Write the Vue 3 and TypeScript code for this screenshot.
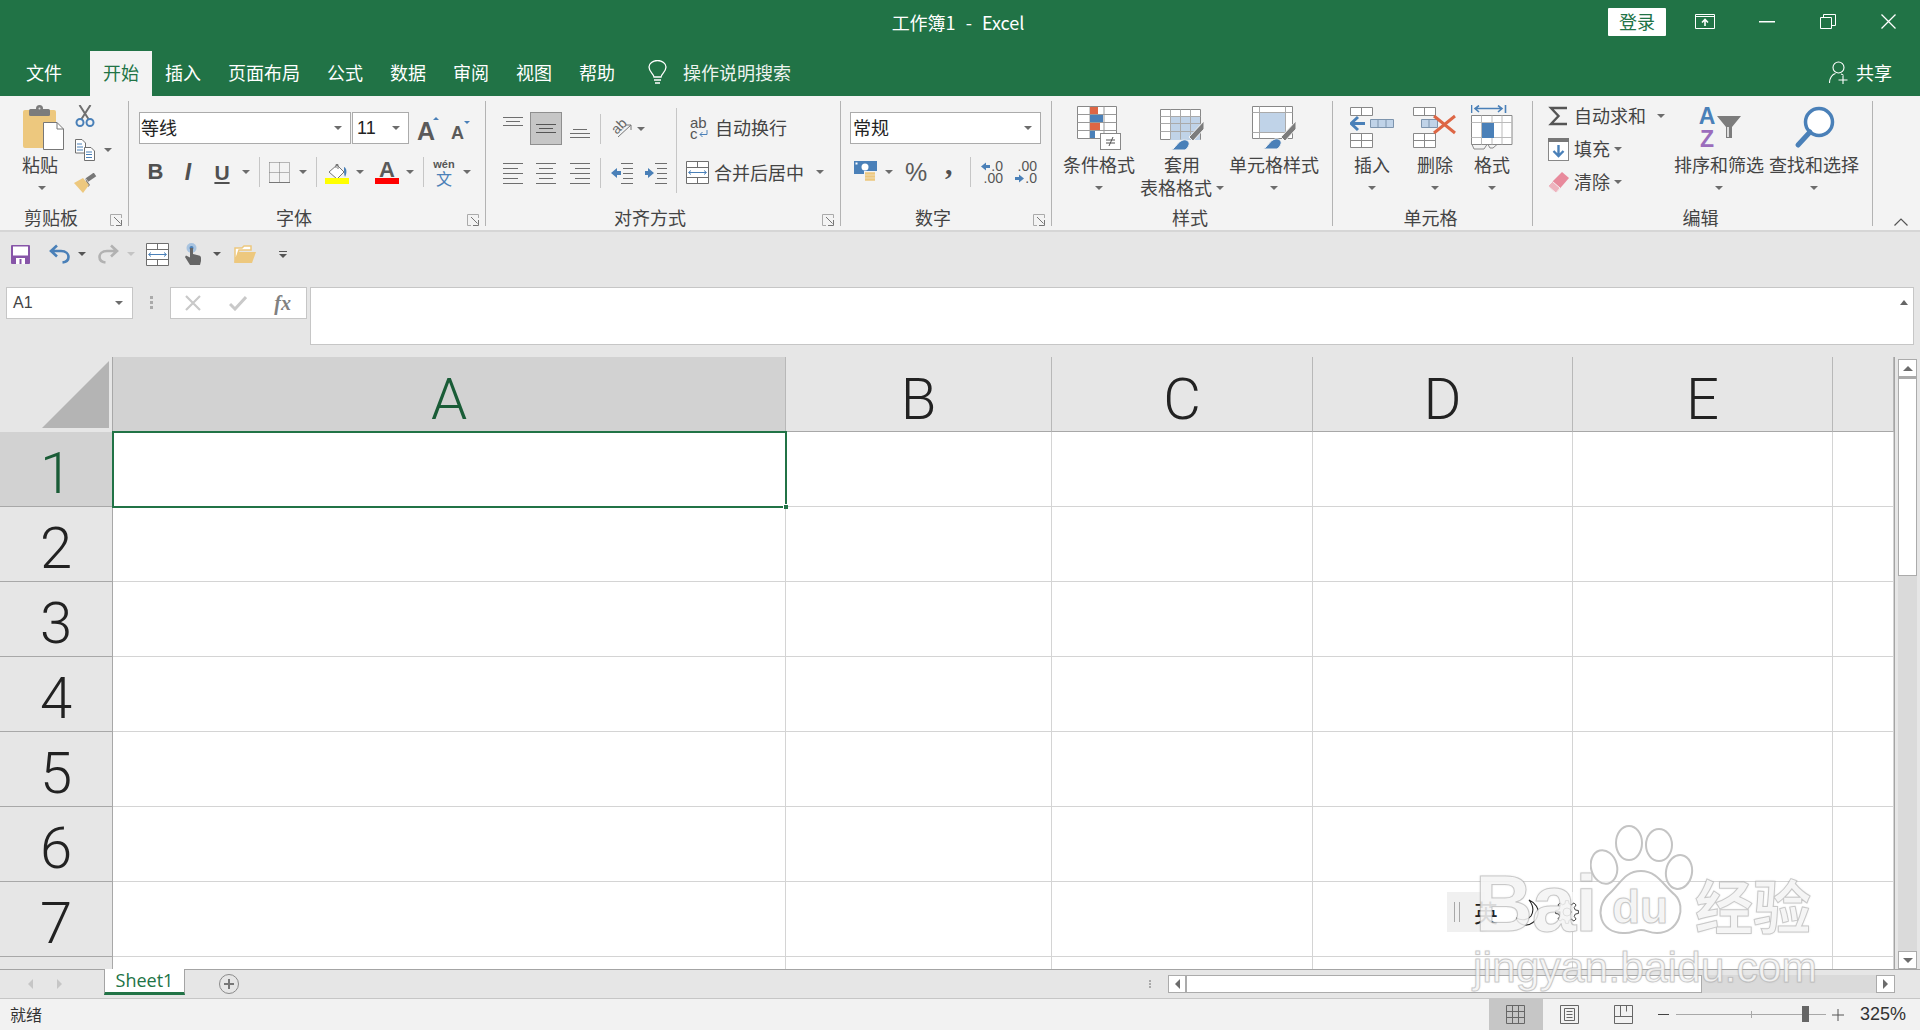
<script setup lang="ts">
// Excel 2016 主窗口：功能区 + 工作表
const columns = ['A', 'B', 'C', 'D', 'E', '']
const rows = [1, 2, 3, 4, 5, 6, 7, 8]

// 输入法工具条的齿轮轮廓
function gearPath(teeth: number, outer: number, inner: number): string {
  const pts: string[] = []
  const step = (Math.PI * 2) / teeth
  for (let i = 0; i < teeth; i++) {
    const a = i * step
    const offsets: [number, number][] = [[-0.3, inner], [-0.17, outer], [0.17, outer], [0.3, inner]]
    for (const [k, r] of offsets) {
      const t = a + k * step
      pts.push(`${(12 + r * Math.cos(t)).toFixed(1)} ${(12 + r * Math.sin(t)).toFixed(1)}`)
    }
  }
  return `M${pts.join('L')}Z`
}
const gear = gearPath(8, 11.5, 8.5)
</script>

<template>
  <div class="excel">
    <!-- 标题栏 -->
    <header class="titlebar">
      <div></div>
      <div class="doc-title">工作簿1  -  Excel</div>
      <div class="win-controls">
        <button class="login">登录</button>
        <svg class="wc-display" width="20" height="15" viewBox="0 0 20 15" fill="none" stroke="#fff">
          <path d="M.5.5h19v14H.5zM.5 2.500h19" />
          <path d="M10 12V6M7 8.500 10 5.500l3 3" stroke-width="1.600" />
        </svg>
        <svg class="wc-min" width="16" height="2" viewBox="0 0 16 2"><rect width="16" height="1.500" fill="#fff" /></svg>
        <svg class="wc-max" width="16" height="15" viewBox="0 0 16 15" fill="none" stroke="#fff">
          <path d="M.5 3.500h11v11H.5zM3.500 3.500V.5h12v11h-4" />
        </svg>
        <svg class="wc-max" width="15" height="15" viewBox="0 0 15 15" fill="none" stroke="#fff" stroke-width="1.300">
          <path d="M.5.5l14 14M14.500.5l-14 14" />
        </svg>
      </div>
    </header>

    <!-- 选项卡 -->
    <nav class="tabs">
      <span class="tab first">文件</span>
      <span class="tab active">开始</span>
      <span class="tab">插入</span>
      <span class="tab">页面布局</span>
      <span class="tab">公式</span>
      <span class="tab">数据</span>
      <span class="tab">审阅</span>
      <span class="tab">视图</span>
      <span class="tab">帮助</span>
      <svg class="bulb" width="19" height="25" viewBox="0 0 19 25" fill="none" stroke="#fff" stroke-width="1.300">
        <path d="M6 17c0-3-5-5-5-10a8.500 6.500 0 0 1 17 0c0 5-5 7-5 10z" />
        <path d="M6 20h7M7 23h5" stroke-width="1.600" />
      </svg>
      <span class="search">操作说明搜索</span>
      <span class="share">
        <svg width="19" height="23" viewBox="0 0 19 23" fill="none" stroke="#fff" stroke-width="1.100">
          <circle cx="9.500" cy="6.500" r="5.500" />
          <path d="M.5 22c0-5 3-9 6-9.500M12 13c1 .3 2 .8 2.500 1.500M14 15v8M9.500 19h9" />
        </svg>
        共享
      </span>
    </nav>

    <!-- 功能区 -->
    <section class="ribbon">
      <!-- 剪贴板 -->
      <div class="group g-clip">
        <div class="body row">
          <div class="big paste">
            <svg width="41" height="46" viewBox="0 0 41 46">
              <rect y="5" width="33" height="38" rx="2" fill="#edc87e" />
              <rect x="6" y="4" width="21" height="7" rx="1.500" fill="#7c7c7c" />
              <circle cx="16.500" cy="3.500" r="3.500" fill="#7c7c7c" />
              <circle cx="16.500" cy="3.500" r="1" fill="#ddd" />
              <path d="M20.500 17.500H34l6.500 6.500v20.500h-20z" fill="#fff" stroke="#777" />
              <path d="M34 17.500V24h6.500" fill="none" stroke="#777" />
            </svg>
            <span class="t">粘贴</span>
            <i class="caret"></i>
          </div>
          <div class="clip-tools">
            <svg width="20" height="22" viewBox="0 0 20 22" fill="none">
              <path d="M6.500 14 15.500 0M13.500 14 4.500 0" stroke="#6f6f6f" stroke-width="2" />
              <circle cx="5" cy="17.500" r="3.500" stroke="#4a80b8" stroke-width="2" />
              <circle cx="15" cy="17.500" r="3.500" stroke="#4a80b8" stroke-width="2" />
            </svg>
            <div class="copy-row">
              <svg width="20" height="22" viewBox="0 0 20 22" fill="#fff" stroke="#6f6f6f">
                <path d="M.5.5h6.500l3.500 3.500v10h-10z" />
                <path d="M2 5h5M2 8h6M2 11h6" stroke="#4a80b8" />
                <path d="M9.500 8.500h6.500l3.500 3.500v9.500h-10z" />
                <path d="M11 13h6M11 15.500h6M11 18.500h6" stroke="#4a80b8" />
              </svg>
              <i class="caret m9"></i>
            </div>
            <svg width="23" height="20" viewBox="0 0 23 20">
              <path d="M13 7 21 1.500" stroke="#777" stroke-width="4.500" />
              <path d="M11 5l5 7-2 2z" fill="#777" />
              <path d="M0 10l9-5 6 7-6 8z" fill="#edc87e" />
            </svg>
          </div>
        </div>
        <div class="glabel launch-gap">剪贴板</div>
        <svg class="launcher" width="12" height="12" viewBox="0 0 12 12" fill="none" stroke="#777">
          <path d="M11.500 4V.5H.5v11H4" stroke="#aaa" />
          <path d="M4 3l6.500 6.500M6 11.500h5.500V6" />
        </svg>
      </div>

      <!-- 字体 -->
      <div class="group g-font">
        <div class="body">
          <div class="row r1">
            <div class="select font-name"><span>等线</span><i class="caret"></i></div>
            <div class="select font-size"><span>11</span><i class="caret"></i></div>
            <span class="grow-a big-a">A<b class="tri up"></b></span>
            <span class="grow-a small-a">A<b class="tri down"></b></span>
          </div>
          <div class="row r2">
            <span class="fmt bold">B</span>
            <span class="fmt ital">I</span>
            <span class="fmt under"><u>U</u></span>
            <i class="caret m2"></i>
            <i class="sep m9"></i>
            <svg class="m9" width="21" height="21" viewBox="0 0 21 21" fill="none" stroke="#777">
              <path d="M.5.5h20M.5 10.500h20M.5.5v20M10.500.5v20M20.500.5v20" stroke-dasharray="1 1" />
              <path d="M0 20.500h21" />
            </svg>
            <i class="caret m9"></i>
            <i class="sep m9"></i>
            <span class="swatch-btn m8">
              <svg width="24" height="18" viewBox="0 0 24 18">
                <path d="M4 9l8-7 7 7-7 7z" fill="#fff" stroke="#777" />
                <path d="M11 5V1.500h2V6" fill="none" stroke="#777" />
                <path d="M19 4c3 1 3 6 1 10-1-2-1-6-1-10z" fill="#4a80b8" />
              </svg>
              <i class="bar yellow"></i>
            </span>
            <i class="caret m7"></i>
            <span class="swatch-btn color-a m11">A<i class="bar red"></i></span>
            <i class="caret m7"></i>
            <i class="sep m9"></i>
            <span class="wen m10"><small>wén</small><em>文</em></span>
            <i class="caret m9"></i>
          </div>
        </div>
        <div class="glabel launch-gap">字体</div>
        <svg class="launcher" width="12" height="12" viewBox="0 0 12 12" fill="none" stroke="#777">
          <path d="M11.500 4V.5H.5v11H4" stroke="#aaa" />
          <path d="M4 3l6.500 6.500M6 11.500h5.500V6" />
        </svg>
      </div>

      <!-- 对齐方式 -->
      <div class="group g-align">
        <div class="body row">
          <div class="align-left">
            <div class="row r1 tight">
              <span class="cell c34 start">
                <svg width="20" height="10" viewBox="0 0 20 10" stroke="#6e6e6e"><path d="M0 .5h20M3 4.500h14M0 8.500h20" /></svg>
              </span>
              <span class="cell c32 picked">
                <svg width="20" height="10" viewBox="0 0 20 10" stroke="#555"><path d="M0 .5h20M3 4.500h14M0 8.500h20" /></svg>
              </span>
              <span class="cell c36 end">
                <svg width="20" height="10" viewBox="0 0 20 10" stroke="#6e6e6e"><path d="M3 .5h14M0 4.500h20M0 8.500h20" /></svg>
              </span>
              <i class="sep m2"></i>
              <span class="ori m10">
                <span class="ori-ab">ab</span>
                <svg width="21" height="19" viewBox="0 0 21 19" fill="none" stroke="#777"><path d="M7 18 20 6M20 6h-5M20 6v5" /></svg>
              </span>
              <i class="caret m5"></i>
            </div>
            <div class="row r2 tight">
              <span class="cell c34">
                <svg width="20" height="22" viewBox="0 0 20 22" stroke="#6e6e6e"><path d="M0 1.500h20M0 6.500h15M0 11.500h20M0 16.500h15M0 21.500h20" /></svg>
              </span>
              <span class="cell c32">
                <svg width="20" height="22" viewBox="0 0 20 22" stroke="#6e6e6e"><path d="M0 1.500h20M3 6.500h14M0 11.500h20M3 16.500h14M0 21.500h20" /></svg>
              </span>
              <span class="cell c36">
                <svg width="20" height="22" viewBox="0 0 20 22" stroke="#6e6e6e"><path d="M0 1.500h20M5 6.500h15M0 11.500h20M5 16.500h15M0 21.500h20" /></svg>
              </span>
              <i class="sep m2"></i>
              <svg class="m10" width="22" height="22" viewBox="0 0 22 22">
                <path d="M10 1.500h12M12 6.500h10M12 11.500h10M12 16.500h10M10 21.500h12" stroke="#6e6e6e" />
                <path d="M0 11l6-5v3h4v4H6v3z" fill="#4a80b8" />
              </svg>
              <svg class="m12" width="22" height="22" viewBox="0 0 22 22">
                <path d="M10 1.500h12M12 6.500h10M12 11.500h10M12 16.500h10M10 21.500h12" stroke="#6e6e6e" />
                <path d="M9 11 3 6v3H0v4h3v3z" fill="#4a80b8" />
              </svg>
            </div>
          </div>
          <i class="sep-long"></i>
          <div class="align-right">
            <div class="line-tool wrap">
              <span class="wrap-ic">
                <span>ab</span>
                <span class="wrap-c">c<svg width="9" height="8" viewBox="0 0 9 8" fill="none" stroke="#4a80b8"><path d="M8 0v4.500H1M3.500 2 1 4.500 3.500 7" /></svg></span>
              </span>
              <span class="m7">自动换行</span>
            </div>
            <div class="line-tool merge">
              <svg width="23" height="23" viewBox="0 0 23 23" fill="#fff" stroke="#6e6e6e">
                <path d="M.5.5h22v22H.5z" />
                <path d="M.5 6.500h22M.5 16.500h22M11.500.5v6M11.500 16.500v6" />
                <path d="M3 11.500h17M5 9.500l-2.500 2 2.500 2M18 9.500l2.500 2-2.500 2" stroke="#4a80b8" fill="none" />
              </svg>
              <span class="m5">合并后居中</span>
              <i class="caret m12"></i>
            </div>
          </div>
        </div>
        <div class="glabel launch-gap">对齐方式</div>
        <svg class="launcher" width="12" height="12" viewBox="0 0 12 12" fill="none" stroke="#777">
          <path d="M11.500 4V.5H.5v11H4" stroke="#aaa" />
          <path d="M4 3l6.500 6.500M6 11.500h5.500V6" />
        </svg>
      </div>

      <!-- 数字 -->
      <div class="group g-num">
        <div class="body">
          <div class="row r1">
            <div class="select num-fmt"><span>常规</span><i class="caret"></i></div>
          </div>
          <div class="row r2">
            <svg class="m13" width="23" height="23" viewBox="0 0 23 23">
              <rect width="23" height="13" fill="#4a80b8" />
              <circle cx="11" cy="6" r="3.500" fill="#fff" />
              <rect x="1.500" y="1.500" width="2" height="2" fill="#fff" />
              <rect x="10" y="10" width="13" height="12" fill="#f3f3f3" />
              <path d="M11 12.500h10M11 15.500h10M11 18.500h10" stroke="#edc87e" stroke-width="2.500" />
            </svg>
            <i class="caret m8"></i>
            <span class="pct m12">%</span>
            <span class="comma">,</span>
            <i class="sep m15"></i>
            <span class="dec m9">
              <span class="dl"><svg width="9" height="9" viewBox="0 0 9 9"><path d="M0 4.500 5 .5V3h4v3H5v2.500z" fill="#4a80b8" /></svg>.0</span>
              <span class="dl">.00</span>
            </span>
            <span class="dec m11">
              <span class="dl">.00</span>
              <span class="dl"><svg width="9" height="9" viewBox="0 0 9 9"><path d="M9 4.500 4 .5V3H0v3h4v2.500z" fill="#4a80b8" /></svg>.0</span>
            </span>
          </div>
        </div>
        <div class="glabel launch-gap">数字</div>
        <svg class="launcher" width="12" height="12" viewBox="0 0 12 12" fill="none" stroke="#777">
          <path d="M11.500 4V.5H.5v11H4" stroke="#aaa" />
          <path d="M4 3l6.500 6.500M6 11.500h5.500V6" />
        </svg>
      </div>

      <!-- 样式 -->
      <div class="group g-style">
        <div class="body row">
          <div class="big w72 m11">
            <svg class="ic" width="44" height="46" viewBox="0 0 44 46">
              <path d="M.5 1.500h39v32H.5z" fill="#fff" stroke="#888" />
              <path d="M.5 9.500h39M.5 17.500h39M.5 25.500h39M13 1.500v32M27 1.500v32" stroke="#999" />
              <rect x="13" y="2" width="8" height="7" fill="#dd6645" />
              <rect x="13" y="10" width="13" height="7" fill="#4a80b8" />
              <rect x="13" y="18" width="10" height="7" fill="#dd6645" />
              <rect x="13" y="26" width="5" height="7" fill="#4a80b8" />
              <rect x="23.500" y="28.500" width="20" height="16" fill="#fff" stroke="#888" />
              <path d="M29 35h9M29 38h9M36 32l-4 9" stroke="#555" fill="none" />
            </svg>
            <span class="t">条件格式</span>
            <i class="caret"></i>
          </div>
          <div class="big w84 m5">
            <svg class="ic" width="44" height="46" viewBox="0 0 44 46">
              <path d="M.5 4.500h40v30H.5z" fill="#fff" stroke="#888" />
              <rect x="10" y="11" width="30" height="24" fill="#c0d3e8" />
              <path d="M.5 11.500h40M.5 18.500h40M.5 26.500h40M10.500 4.500v30M20.500 4.500v30M30.500 4.500v30" stroke="#aaa" />
              <path d="M29 32 44 16v8L33 36z" fill="#7c7c7c" stroke="#f3f3f3" />
              <path d="M11 45c5-2 6-8 12-10 4-1 7 2 6 5-1 2-2 4-4 5z" fill="#4a80b8" stroke="#f3f3f3" />
            </svg>
            <span class="t">套用</span>
            <span class="t t2">表格格式<i class="caret m4"></i></span>
          </div>
          <div class="big w90 m5">
            <svg class="ic" width="44" height="46" viewBox="0 0 44 46">
              <path d="M.5 1.500h40v32H.5z" fill="#fff" stroke="#888" />
              <path d="M.5 7.500h40M.5 27.500h40M7.500 1.500v32M33.500 1.500v32" stroke="#aaa" />
              <rect x="8" y="8" width="25" height="19" fill="#c0d3e8" />
              <path d="M29 32 44 16v8L33 36z" fill="#7c7c7c" stroke="#f3f3f3" />
              <path d="M11 44c5-2 6-8 12-10 4-1 7 2 6 5-1 2-2 4-4 5z" fill="#4a80b8" stroke="#f3f3f3" />
            </svg>
            <span class="t">单元格样式</span>
            <i class="caret"></i>
          </div>
        </div>
        <div class="glabel">样式</div>
      </div>

      <!-- 单元格 -->
      <div class="group g-cells">
        <div class="body row">
          <div class="big w44 m17">
            <svg class="ic" width="44" height="46" viewBox="0 0 44 46" fill="#fff" stroke="#888">
              <path d="M.5 2.500h22v8H.5zM11.500 2.500v8M.5 28.500h22v14H.5zM.5 35.500h22M11.500 28.500v14" />
              <path d="M20.500 14.500h23v8h-23zM28 14.500v8M36 14.500v8" fill="#c0d3e8" stroke="#7d94ad" />
              <path d="M15 18.500H3M8 12l-7 6.500 7 6.500" fill="none" stroke="#4a80b8" stroke-width="3" />
            </svg>
            <span class="t">插入</span>
            <i class="caret"></i>
          </div>
          <div class="big w44 m19">
            <svg class="ic" width="44" height="46" viewBox="0 0 44 46" fill="#fff" stroke="#888">
              <path d="M.5 2.500h22v8H.5zM11.500 2.500v8M.5 28.500h22v14H.5zM.5 35.500h22M11.500 28.500v14" />
              <path d="M8.500 14.500h16v8h-16zM16 14.500v8" fill="#c0d3e8" stroke="#7d94ad" />
              <path d="M21 11l21 17M42 11 21 28" fill="none" stroke="#dd6645" stroke-width="3" />
            </svg>
            <span class="t">删除</span>
            <i class="caret"></i>
          </div>
          <div class="big w42 m14">
            <svg class="ic" width="42" height="46" viewBox="0 0 42 46" fill="#fff" stroke="#888">
              <path d="M.5 0v8M34.500 0v8M4 3.500h27M8 .5 4 3.500 8 7M27 .5 31 3.500 27 7" fill="none" stroke="#4a80b8" stroke-width="1.600" />
              <path d="M.5 10.500h40.500v29H.5z" />
              <path d="M.5 32.500h40.500M10.500 10.500v29M21 10.500v29M31 10.500v29M.5 17.500h40.500" stroke="#bbb" />
              <rect x="11" y="18" width="12" height="15" fill="#4a80b8" stroke="none" />
              <path d="M1 39.500 3 44h10l3-4.500M17 39.500l2 3.500h3l4-3.500" fill="none" />
            </svg>
            <span class="t">格式</span>
            <i class="caret"></i>
          </div>
        </div>
        <div class="glabel">单元格</div>
      </div>

      <!-- 编辑 -->
      <div class="group g-edit">
        <div class="body row">
          <div class="edit-list">
            <div class="edit-row">
              <svg class="ei" width="19" height="20" viewBox="0 0 19 20" fill="none" stroke="#555" stroke-width="2.400"><path d="M18 2H2l7.500 8L2 18h16" /></svg>
              <span class="et">自动求和</span><i class="caret m11"></i>
            </div>
            <div class="edit-row">
              <svg class="ei" width="21" height="23" viewBox="0 0 21 23">
                <rect x=".5" y=".5" width="20" height="22" fill="#fff" stroke="#888" />
                <rect width="21" height="4" fill="#777" />
                <path d="M10.500 7v11M5.500 13l5 5 5-5" fill="none" stroke="#4a80b8" stroke-width="2.400" />
              </svg>
              <span class="et">填充</span><i class="caret m4"></i>
            </div>
            <div class="edit-row">
              <svg class="ei" width="21" height="21" viewBox="0 0 21 21">
                <path d="M14 0l7 6-13 15-8-7z" fill="#e88a9c" />
                <path d="M0 14 4.500 9.500l7.500 6.500-4 5z" fill="#eeb3be" stroke="#f3f3f3" />
              </svg>
              <span class="et">清除</span><i class="caret m4"></i>
            </div>
          </div>
          <div class="big w90 m8">
            <span class="sort-ic">
              <span class="az"><b class="az-a">A</b><b class="az-z">Z</b></span>
              <svg width="24" height="24" viewBox="0 0 24 24">
                <path d="M0 1h24l-9 11v11h-6V12z" fill="#7c7c7c" />
                <path d="M10 12h2v10h-2z" fill="#ddd" />
              </svg>
            </span>
            <span class="t">排序和筛选</span>
            <i class="caret"></i>
          </div>
          <div class="big w90 m5">
            <svg class="ic" width="44" height="46" viewBox="0 0 44 46" fill="none">
              <circle cx="27" cy="17" r="13.500" fill="#fff" stroke="#4a80b8" stroke-width="3.500" />
              <path d="M18 27 6 40" stroke="#4a80b8" stroke-width="5" stroke-linecap="round" />
            </svg>
            <span class="t">查找和选择</span>
            <i class="caret"></i>
          </div>
        </div>
        <div class="glabel">编辑</div>
      </div>

      <svg class="collapse" width="14" height="8" viewBox="0 0 14 8" fill="none" stroke="#555" stroke-width="1.200"><path d="M.5 7.500 7 1l6.500 6.500" /></svg>
    </section>

    <!-- 快速访问工具栏 -->
    <div class="qat">
      <svg class="q11" width="19" height="19" viewBox="0 0 19 19">
        <rect width="19" height="19" rx="1" fill="#8755a8" />
        <rect x="2" y="1.500" width="15" height="9" fill="#fff" />
        <rect x="5" y="13" width="9" height="6" fill="#fff" />
        <rect x="8.500" y="14" width="2" height="5" fill="#8755a8" />
      </svg>
      <svg class="q19" width="21" height="20" viewBox="0 0 21 20" fill="none" stroke="#4a80b8" stroke-width="2.600">
        <path d="M8 1.500 2 7l6 5.500M2 7h10c5 0 7.500 3 7.500 6s-2 5-6 5.500" />
      </svg>
      <i class="caret m8 dark"></i>
      <svg class="m12" width="21" height="20" viewBox="0 0 21 20" fill="none" stroke="#b2b2b2" stroke-width="2.600">
        <path d="M13 1.500 19 7l-6 5.500M19 7H9C4 7 1.500 10 1.500 13s2 5 6 5.500" />
      </svg>
      <i class="caret m8 light"></i>
      <svg class="m11" width="23" height="23" viewBox="0 0 23 23" fill="#fff" stroke="#6e6e6e">
        <path d="M.5.5h22v22H.5z" />
        <path d="M.5 6.500h22M.5 16.500h22M11.500.5v6M11.500 16.500v6" />
        <path d="M3 11.500h17M5 9.500l-2.500 2 2.500 2M18 9.500l2.500 2-2.500 2" stroke="#4a80b8" fill="none" />
      </svg>
      <svg class="m16" width="16" height="22" viewBox="0 0 16 22">
        <circle cx="6.500" cy="5" r="5" fill="#a9c4e0" />
        <circle cx="6.500" cy="5" r="2" fill="#4a80b8" />
        <path d="M5 5h3v6l6 1.500c1 .3 2 1 2 2.500v3l-1 4H5L0 14l1-1.500 4 2z" fill="#666" />
      </svg>
      <i class="caret m12 dark"></i>
      <svg class="m13" width="22" height="18" viewBox="0 0 22 18">
        <path d="M1 17V3h7l2-2h7v4H5z" fill="#fff" stroke="#edc87e" stroke-width="1.500" />
        <path d="M0 18 4 7h18l-4 11z" fill="#edc87e" />
      </svg>
      <span class="customize m23"><b></b><i class="caret dark"></i></span>
    </div>

    <!-- 编辑栏 -->
    <div class="formula">
      <div class="namebox"><span>A1</span><i class="caret"></i></div>
      <span class="grip"><b></b><b></b><b></b></span>
      <div class="fx-box">
        <svg width="16" height="16" viewBox="0 0 16 16" fill="none" stroke="#c9c9c9" stroke-width="2.200"><path d="M1 1l14 14M15 1 1 15" /></svg>
        <svg width="18" height="15" viewBox="0 0 18 15" fill="none" stroke="#c9c9c9" stroke-width="3"><path d="M1 8l5 5L17 1" /></svg>
        <span class="fx-text">fx</span>
      </div>
      <div class="fx-input"><i class="tiny-up"></i></div>
    </div>

    <!-- 工作表 -->
    <div class="sheet">
      <div class="grid">
        <div class="corner">
          <svg width="67" height="67" viewBox="0 0 67 67"><path d="M67 0v67H0z" fill="#b4b4b4" /></svg>
        </div>
        <div v-for="c in columns" :key="c" class="col-head" :class="{ on: c === 'A' }">{{ c }}</div>
        <template v-for="r in rows" :key="r">
          <div class="row-head" :class="{ on: r === 1 }">{{ r < 8 ? r : '' }}</div>
          <div v-for="c in columns" :key="c" class="gcell"></div>
        </template>
        <div class="selection"><b></b></div>
      </div>
      <div class="vscroll">
        <div class="sb-btn"><i class="tri-up"></i></div>
        <div class="sb-thumb"></div>
        <div class="sb-track"></div>
        <div class="sb-btn"><i class="tri-down"></i></div>
      </div>
    </div>

    <!-- 工作表标签 + 水平滚动条 -->
    <div class="sheetbar">
      <i class="nav nav-l"></i>
      <i class="nav nav-r"></i>
      <div class="sheet-tab">Sheet1</div>
      <svg class="add" width="20" height="20" viewBox="0 0 20 20" fill="none">
        <circle cx="10" cy="10" r="9.500" stroke="#8a8a8a" />
        <path d="M10 5v10M5 10h10" stroke="#777" stroke-width="2" />
      </svg>
      <div class="hscroll">
        <span class="grip small"><b></b><b></b><b></b></span>
        <div class="hb-btn"><i class="tri-left"></i></div>
        <div class="hb-thumb"></div>
        <div class="hb-track"></div>
        <div class="hb-btn wide"><i class="tri-right"></i></div>
      </div>
    </div>

    <!-- 状态栏 -->
    <footer class="status">
      <span class="ready">就绪</span>
      <div class="status-right">
        <span class="view on">
          <svg width="19" height="19" viewBox="0 0 19 19" fill="none" stroke="#666"><path d="M.5.5h18v18H.5zM.5 6.500h18M.5 12.500h18M6.500.5v18M12.500.5v18" /></svg>
        </span>
        <span class="view">
          <svg width="19" height="19" viewBox="0 0 19 19" fill="none" stroke="#666"><path d="M.5.5h18v18H.5zM4.500 3.500h10v12h-10zM6.500 6.500h6M6.500 9.500h6M6.500 12.500h6" /></svg>
        </span>
        <span class="view">
          <svg width="19" height="19" viewBox="0 0 19 19" fill="none" stroke="#666"><path d="M.5.5h18v18H.5zM.5 11.500h18M6.500.5v11M12.500.5v6" /></svg>
        </span>
        <i class="zoom-minus"></i>
        <div class="slider"><i class="tick"></i><b class="knob"></b></div>
        <svg class="zoom-plus" width="12" height="12" viewBox="0 0 12 12" stroke="#555"><path d="M0 6h12M6 0v12" /></svg>
        <span class="pct-zoom">325%</span>
      </div>
    </footer>

    <!-- 输入法工具条 -->
    <div class="ime">
      <i class="ime-grip"></i>
      <span class="ime-lang">英</span>
      <svg class="ime-moon" width="23" height="27" viewBox="0 0 23 27" fill="none" stroke="#222" stroke-width="1.100">
        <path d="M13 1C20 4 23 10 22 15 21 22 14 27 8 26 4 25 1 22 0 19 6 22 12 21 15 17 18 12 17 6 13 1Z" />
      </svg>
      <svg class="ime-gear" width="24" height="24" viewBox="0 0 24 24" fill="none" stroke="#444">
        <path :d="gear" />
        <circle cx="12" cy="12" r="4" />
      </svg>
    </div>

    <!-- 水印 -->
    <div class="watermark">
      <span class="wm-bai">Bai</span>
      <svg class="wm-paw" width="110" height="112" viewBox="0 0 110 112">
        <g fill="rgba(255,255,255,.6)" stroke="#c4c4c4" stroke-width="2">
          <ellipse cx="39" cy="18" rx="13" ry="17" />
          <ellipse cx="69" cy="20" rx="13" ry="16" />
          <ellipse cx="14" cy="42" rx="13" ry="17" transform="rotate(-15 14 42)" />
          <ellipse cx="89" cy="47" rx="13" ry="17" transform="rotate(10 89 47)" />
          <path d="M51 46c16 0 22 14 34 24 12 12 4 38-18 38-8 0-10-3-16-3s-10 4-18 3C10 108 4 84 18 70c12-10 16-24 33-24z" />
        </g>
      </svg>
      <span class="wm-du">du</span>
      <span class="wm-jy">经验</span>
      <span class="wm-url">jingyan.baidu.com</span>
    </div>
  </div>
</template>

<style scoped>
.excel {
  position: relative;
  width: 1920px;
  height: 1030px;
  display: flex;
  flex-direction: column;
  overflow: hidden;
  background: #e6e6e6;
  font-family: "Noto Sans CJK SC", sans-serif;
  font-size: 18px;
  color: #444;
}
i { display: block; font-style: normal; }

/* 通用间距 */
.m2 { margin-left: 2px; } .m4 { margin-left: 4px; } .m5 { margin-left: 5px; }
.m7 { margin-left: 7px; } .m8 { margin-left: 8px; } .m9 { margin-left: 9px; }
.m10 { margin-left: 10px; } .m11 { margin-left: 11px; } .m12 { margin-left: 12px; }
.m13 { margin-left: 13px; } .m14 { margin-left: 14px; } .m15 { margin-left: 15px; }
.m16 { margin-left: 16px; } .m17 { margin-left: 17px; } .m19 { margin-left: 19px; }
.m23 { margin-left: 23px; } .q11 { margin-left: 11px; } .q19 { margin-left: 19px; }

.caret {
  flex: none;
  width: 0;
  height: 0;
  border-left: 4px solid transparent;
  border-right: 4px solid transparent;
  border-top: 4px solid #6c6c6c;
}
.caret.dark { border-top-color: #555; }
.caret.light { border-top-color: #c4c4c4; }
.sep { flex: none; width: 1px; height: 30px; background: #c6c6c6; }

/* 标题栏 */
.titlebar {
  flex: none;
  height: 51px;
  display: grid;
  grid-template-columns: 1fr auto 1fr;
  align-items: center;
  background: #217346;
  color: #fff;
}
.doc-title { white-space: pre; font-size: 18px; word-spacing: 6px; padding-bottom: 8px; margin-left: -4px; }
.win-controls { display: flex; align-items: center; justify-content: flex-end; padding: 0 24px 8px 0; }
.login {
  width: 58px;
  height: 28px;
  padding: 0 0 2px;
  border: none;
  border-radius: 1px;
  background: #fff;
  color: #217346;
  font: 18px "Noto Sans CJK SC", sans-serif;
}
.wc-display { margin-left: 29px; }
.wc-min { margin-left: 44px; }
.wc-max { margin-left: 45px; }

/* 选项卡 */
.tabs {
  flex: none;
  height: 45px;
  display: flex;
  background: #217346;
  color: #fff;
}
.tab { padding: 0 13px; margin-right: 1px; line-height: 42px; }
.tab.first { margin-left: 13px; margin-right: 15px; }
.tab.active { background: #f3f3f3; color: #217346; margin-right: 0; }
.bulb { margin: 9px 0 0 19px; }
.search { margin-left: 16px; line-height: 42px; opacity: .92; }
.share { margin-left: auto; padding-right: 28px; display: flex; align-items: center; gap: 8px; height: 42px; }

/* 功能区 */
.ribbon {
  position: relative;
  flex: none;
  height: 136px;
  box-sizing: border-box;
  padding-top: 5px;
  display: flex;
  align-items: flex-start;
  background: #f3f3f3;
  border-bottom: 2px solid #d6d6d6;
}
.group {
  position: relative;
  flex: none;
  box-sizing: border-box;
  height: 125px;
  border-right: 1px solid #b3b3b3;
}
.g-clip { width: 129px; }
.g-font { width: 357px; padding-left: 10px; }
.g-align { width: 355px; }
.g-num { width: 211px; }
.g-style { width: 281px; }
.g-cells { width: 200px; }
.g-edit { width: 340px; }
.body { height: 105px; display: flow-root; }
.row { display: flex; align-items: flex-start; }
.r1 { margin-top: 11px; height: 32px; align-items: center; }
.r2 { margin-top: 13px; height: 30px; align-items: center; }
.glabel { height: 24px; line-height: 22px; text-align: center; padding-right: 4px; font-size: 18px; color: #444; }
.glabel.launch-gap { padding-right: 26px; }
.g-font .glabel { margin-left: -10px; }
.launcher { position: absolute; right: 6px; top: 113px; }

.big { flex: none; display: flex; flex-direction: column; align-items: center; padding-top: 4px; }
.big .ic { flex: none; }
.big .t { line-height: 23px; margin-top: 2px; white-space: nowrap; }
.big .t2 { margin-top: 0; display: flex; align-items: center; }
.big > .caret { margin-top: 10px; }
.w42 { width: 42px; } .w44 { width: 44px; } .w72 { width: 72px; } .w84 { width: 84px; } .w90 { width: 90px; }

.paste { width: 60px; margin-left: 13px; }
.paste svg { margin-left: 1px; }
.paste .t { margin-right: 6px; }
.paste > .caret { margin-right: 2px; }
.clip-tools { margin-left: 2px; padding-top: 4px; display: flex; flex-direction: column; gap: 12px; }
.copy-row { display: flex; align-items: center; }
.copy-row + svg { margin-left: -1px; }

/* 下拉框 */
.select {
  flex: none;
  box-sizing: border-box;
  height: 32px;
  padding: 0 8px 0 2px;
  display: flex;
  align-items: center;
  justify-content: space-between;
  border: 1px solid #ababab;
  background: #fff;
  color: #222;
  font-size: 18px;
}
.select span { margin-top: -2px; }
.font-name { width: 212px; padding-left: 1px; }
.font-size { width: 57px; margin-left: 1px; font-family: "Liberation Sans", sans-serif; padding-left: 4px; }
.font-size span { margin-top: 0; }
.num-fmt { width: 191px; margin-left: 9px; }
.grow-a { position: relative; display: block; font-family: "Liberation Sans", sans-serif; font-weight: 700; color: #5a5a5a; line-height: 1; }
.big-a { font-size: 25px; margin: 6px 0 0 8px; }
.small-a { font-size: 18px; margin: 10px 0 0 16px; }
.tri { position: absolute; width: 0; height: 0; border-left: 3px solid transparent; border-right: 3px solid transparent; }
.tri.up { left: 16px; top: -2px; border-bottom: 3px solid #4a80b8; }
.tri.down { left: 13px; top: -3px; border-top: 3px solid #4a80b8; }

.fmt { flex: none; display: block; text-align: center; font-family: "Liberation Sans", sans-serif; color: #505050; line-height: 1; }
.bold { width: 33px; font-weight: 700; font-size: 22px; }
.ital { width: 32px; font-size: 23px; font-style: italic; font-weight: 700; }
.under { width: 36px; font-size: 21px; font-weight: 700; }
.under u { text-underline-offset: 2px; text-decoration-thickness: 2px; }
.swatch-btn { position: relative; flex: none; display: block; width: 24px; height: 24px; }
.bar { position: absolute; left: 0; bottom: 0; width: 24px; height: 6px; }
.bar.yellow { background: #ffff00; }
.bar.red { background: #ff0000; }
.color-a { font: 700 22px/20px "Liberation Sans", sans-serif; color: #5a5a5a; text-align: center; }
.wen { flex: none; width: 20px; display: flex; flex-direction: column; align-items: center; line-height: 1; }
.wen small { font: 700 11px/11px "Liberation Sans", sans-serif; color: #555; }
.wen em { font-style: normal; font-size: 16px; line-height: 16px; color: #4a80b8; }

/* 对齐方式 */
.align-left { flex: none; width: 190px; padding-left: 10px; box-sizing: border-box; }
.r1.tight { height: 33px; }
.r2.tight { margin-top: 13px; }
.cell { flex: none; display: flex; align-items: center; justify-content: center; height: 30px; }
.c32 { width: 32px; } .c34 { width: 34px; } .c36 { width: 36px; }
.r1 .cell { height: 33px; }
.cell.start { align-items: flex-start; padding-top: 5px; box-sizing: border-box; }
.cell.end { align-items: flex-end; padding-bottom: 6px; box-sizing: border-box; }
.picked { box-sizing: border-box; background: #c6c6c6; border: 1px solid #8f8f8f; }
.ori { position: relative; flex: none; display: block; width: 21px; height: 19px; }
.ori svg { display: block; }
.ori-ab {
  position: absolute;
  left: 0;
  top: 0;
  font: 14px/14px "Liberation Sans", sans-serif;
  color: #666;
  transform: rotate(-45deg);
}
.sep-long { flex: none; width: 1px; height: 85px; margin-top: 7px; background: #c6c6c6; }
.align-right { flex: none; }
.line-tool { display: flex; align-items: center; white-space: nowrap; }
.wrap { margin: 11px 0 0 13px; height: 32px; }
.wrap > span:last-child { margin-top: -2px; }
.merge { margin: 13px 0 0 9px; height: 30px; }
.merge > span { margin-top: -1px; }
.wrap-ic { flex: none; display: flex; flex-direction: column; width: 18px; font: 15px/11px "Liberation Sans", sans-serif; color: #555; }
.wrap-c { display: flex; align-items: center; gap: 1px; }

/* 数字 */
.pct { flex: none; font: 25px/1 "Liberation Sans", sans-serif; color: #5a5a5a; width: 22px; }
.comma { flex: none; width: 10px; margin-left: 18px; font: 700 30px/1 "Liberation Serif", serif; color: #505050; transform: translateY(-8px); }
.dec { flex: none; width: 23px; display: flex; flex-direction: column; font: 14px/12px "Liberation Sans", sans-serif; color: #555; }
.dl { display: flex; align-items: center; justify-content: flex-end; gap: 1px; }

/* 编辑 */
.edit-list { flex: none; margin-left: 15px; display: flex; flex-direction: column; gap: 3px; width: 118px; }
.edit-row { height: 30px; display: flex; align-items: center; }
.et { margin-top: -2px; }
.ei { flex: none; width: 21px; margin-right: 5px; }
.sort-ic { flex: none; width: 44px; height: 46px; display: flex; align-items: flex-start; }
.az { flex: none; width: 20px; display: flex; flex-direction: column; align-items: center; font: 700 23px/23px "Liberation Sans", sans-serif; }
.az-a { color: #4a80b8; }
.az-z { color: #9b6cbc; }
.sort-ic svg { margin-top: 10px; }
.collapse { position: absolute; right: 12px; top: 122px; }

/* 快速访问工具栏 */
.qat { flex: none; height: 44px; display: flex; align-items: center; }
.customize { display: flex; flex-direction: column; align-items: center; gap: 2px; width: 8px; }
.customize b { display: block; width: 8px; height: 1px; background: #555; }

/* 编辑栏 */
.formula { flex: none; height: 81px; box-sizing: border-box; padding: 11px 0 0 6px; display: flex; align-items: flex-start; }
.namebox {
  box-sizing: border-box;
  width: 127px;
  height: 32px;
  padding: 0 9px 0 6px;
  display: flex;
  align-items: center;
  justify-content: space-between;
  background: #fff;
  border: 1px solid #c6c6c6;
  font: 16px "Liberation Sans", sans-serif;
  color: #444;
}
.grip { display: flex; flex-direction: column; gap: 2px; width: 3px; margin: 9px 17px 0 17px; }
.grip b { display: block; width: 3px; height: 3px; background: #aaa; }
.grip.small { margin: 0; flex: none; gap: 1px; }
.grip.small b { height: 2px; width: 2px; }
.fx-box {
  box-sizing: border-box;
  width: 137px;
  height: 32px;
  display: flex;
  align-items: center;
  justify-content: space-between;
  padding: 0 15px 0 14px;
  background: #fff;
  border: 1px solid #c6c6c6;
}
.fx-text { font: italic 700 20px/1 "Liberation Serif", serif; color: #808080; }
.fx-input {
  position: relative;
  box-sizing: border-box;
  width: 1604px;
  height: 58px;
  margin-left: 3px;
  background: #fff;
  border: 1px solid #c6c6c6;
}
.tiny-up {
  position: absolute;
  right: 5px;
  top: 12px;
  width: 0;
  height: 0;
  border-left: 4px solid transparent;
  border-right: 4px solid transparent;
  border-bottom: 5px solid #666;
}

/* 工作表 */
.sheet { flex: none; height: 612px; display: flex; overflow: hidden; }
.grid {
  position: relative;
  flex: none;
  width: 1895px;
  height: 612px;
  box-sizing: border-box;
  border-right: 1px solid #a4a4a4;
  overflow: hidden;
  display: grid;
  grid-template-columns: 113px 673px 266px 261px 260px 260px 61px;
  grid-template-rows: 75px repeat(8, 75px);
  background: #fff;
}
.corner {
  box-sizing: border-box;
  padding: 4px 3px 0 42px;
  background: #e6e6e6;
  border-right: 1px solid #a8a8a8;
}
.corner svg { display: block; }
.col-head {
  box-sizing: border-box;
  background: #e6e6e6;
  border-right: 1px solid #b8b8b8;
  border-bottom: 1px solid #a8a8a8;
  text-align: center;
  font: 300 58px/84px Roboto, sans-serif;
  color: #222;
}
.col-head.on { background: #d2d2d2; color: #1a5c37; }
.row-head {
  box-sizing: border-box;
  background: #e6e6e6;
  border-right: 1px solid #a8a8a8;
  border-bottom: 1px solid #a8a8a8;
  text-align: center;
  font: 300 58px/82px Roboto, sans-serif;
  color: #222;
}
.row-head.on { background: #d2d2d2; color: #1a5c37; }
.gcell { box-sizing: border-box; border-right: 1px solid #d4d4d4; border-bottom: 1px solid #d4d4d4; }
.selection {
  position: absolute;
  left: 112px;
  top: 74px;
  width: 675px;
  height: 77px;
  box-sizing: border-box;
  border: 2px solid #217346;
}
.selection b {
  position: absolute;
  right: -3px;
  bottom: -3px;
  width: 5px;
  height: 5px;
  background: #217346;
  border-left: 1px solid #fff;
  border-top: 1px solid #fff;
  box-sizing: border-box;
}
.vscroll { flex: none; width: 19px; margin-left: 3px; padding-top: 2px; box-sizing: border-box; display: flex; flex-direction: column; }
.sb-btn {
  flex: none;
  box-sizing: border-box;
  height: 18px;
  display: flex;
  align-items: center;
  justify-content: center;
  background: #fff;
  border: 1px solid #ababab;
}
.sb-thumb { flex: none; height: 199px; box-sizing: border-box; background: #fff; border: 1px solid #ababab; border-top-width: 2px; }
.sb-track { flex: 1; background: #dadada; }
.tri-up, .tri-down, .tri-left, .tri-right { width: 0; height: 0; border: 4px solid transparent; }
.tri-up { border-top: 0; border-left-width: 5px; border-right-width: 5px; border-bottom: 5px solid #6c6c6c; }
.tri-down { border-bottom: 0; border-left-width: 5px; border-right-width: 5px; border-top: 5px solid #6c6c6c; }
.tri-left { border-left: 0; border-top-width: 5px; border-bottom-width: 5px; border-right: 5px solid #6c6c6c; }
.tri-right { border-right: 0; border-top-width: 5px; border-bottom-width: 5px; border-left: 5px solid #6c6c6c; }

/* 工作表标签 */
.sheetbar {
  flex: none;
  height: 29px;
  box-sizing: border-box;
  display: flex;
  align-items: flex-start;
  border-top: 1px solid #a4a4a4;
  background: #e6e6e6;
}
.nav { flex: none; width: 0; height: 0; margin-top: 9px; border-top: 5px solid transparent; border-bottom: 5px solid transparent; }
.nav-l { margin-left: 28px; border-right: 5px solid #c6c6c6; }
.nav-r { margin-left: 24px; border-left: 5px solid #c6c6c6; }
.sheet-tab {
  flex: none;
  box-sizing: border-box;
  width: 81px;
  height: 26px;
  margin: -1px 0 0 42px;
  background: #fff;
  border-left: 1px solid #a4a4a4;
  border-right: 1px solid #a4a4a4;
  border-bottom: 3px solid #217346;
  text-align: center;
  font: 18px/22px "Open Sans", sans-serif;
  color: #217346;
}
.add { flex: none; margin: 4px 0 0 34px; }
.hscroll { margin: 5px 25px 0 auto; height: 18px; display: flex; align-items: center; }
.hscroll .grip { margin-right: 16px; }
.hb-btn { box-sizing: border-box; width: 18px; height: 18px; display: flex; align-items: center; justify-content: center; background: #fff; border: 1px solid #ababab; }
.hb-btn.wide { width: 19px; }
.hb-thumb { box-sizing: border-box; width: 516px; height: 18px; background: #fff; border: 1px solid #ababab; }
.hb-track { width: 174px; height: 18px; background: #dadada; }

/* 状态栏 */
.status {
  flex: 1;
  display: flex;
  align-items: center;
  box-sizing: border-box;
  border-top: 1px solid #c6c6c6;
  background: #f2f2f2;
}
.ready { margin: -2px 0 0 10px; font-size: 16px; color: #333; }
.status-right { margin-left: auto; display: flex; align-items: center; align-self: stretch; padding-right: 14px; }
.view { width: 54px; display: flex; align-items: center; justify-content: center; align-self: stretch; }
.view.on { background: #c6c6c6; }
.zoom-minus { width: 11px; height: 1px; margin-left: 7px; background: #444; }
.slider { position: relative; width: 150px; height: 1px; margin-left: 7px; background: #a8a8a8; }
.tick { position: absolute; left: 75px; top: -3px; width: 1px; height: 7px; background: #a8a8a8; }
.knob { position: absolute; left: 126px; top: -8px; width: 7px; height: 16px; background: #666; }
.zoom-plus { margin-left: 6px; }
.pct-zoom { margin-left: 16px; font: 18px "Liberation Sans", sans-serif; color: #333; }

/* 输入法工具条 */
.ime {
  position: absolute;
  left: 1447px;
  top: 892px;
  width: 134px;
  height: 40px;
  display: flex;
  align-items: center;
  background: linear-gradient(90deg, #f0f0f0 0, #f0f0f0 30px, rgba(255,255,255,.6) 40px);
}
.ime-grip { width: 6px; height: 20px; margin-left: 7px; box-sizing: border-box; border-left: 1px solid #a8a8a8; border-right: 1px solid #a8a8a8; }
.ime-lang { margin-left: 14px; font-size: 24px; line-height: 1; color: #222; }
.ime-moon { margin-left: 18px; }
.ime-gear { margin-left: 16px; }

/* 水印 */
.watermark { position: absolute; left: 0; top: 0; width: 1920px; height: 1030px; pointer-events: none; }
.wm-bai, .wm-du, .wm-jy, .wm-url {
  position: absolute;
  color: rgba(255, 255, 255, .78);
  -webkit-text-stroke: 1px rgba(160, 160, 160, .5);
  text-shadow: 0 0 2px rgba(150, 150, 150, .45);
  white-space: nowrap;
  line-height: 1;
}
.wm-bai { left: 1475px; top: 864px; font: 700 80px/80px "Liberation Sans", sans-serif; letter-spacing: -1px; }
.wm-du { left: 1612px; top: 884px; font: 700 46px/46px "Liberation Sans", sans-serif; }
.wm-jy { left: 1695px; top: 874px; font: 700 58px/60px "Noto Sans CJK SC", sans-serif; }
.wm-url { left: 1473px; top: 944px; font: 42.700px/46px "Liberation Sans", sans-serif; }
.wm-paw { position: absolute; left: 1590px; top: 825px; }
</style>

<style>
html, body { margin: 0; padding: 0; background: #e6e6e6; }
</style>
